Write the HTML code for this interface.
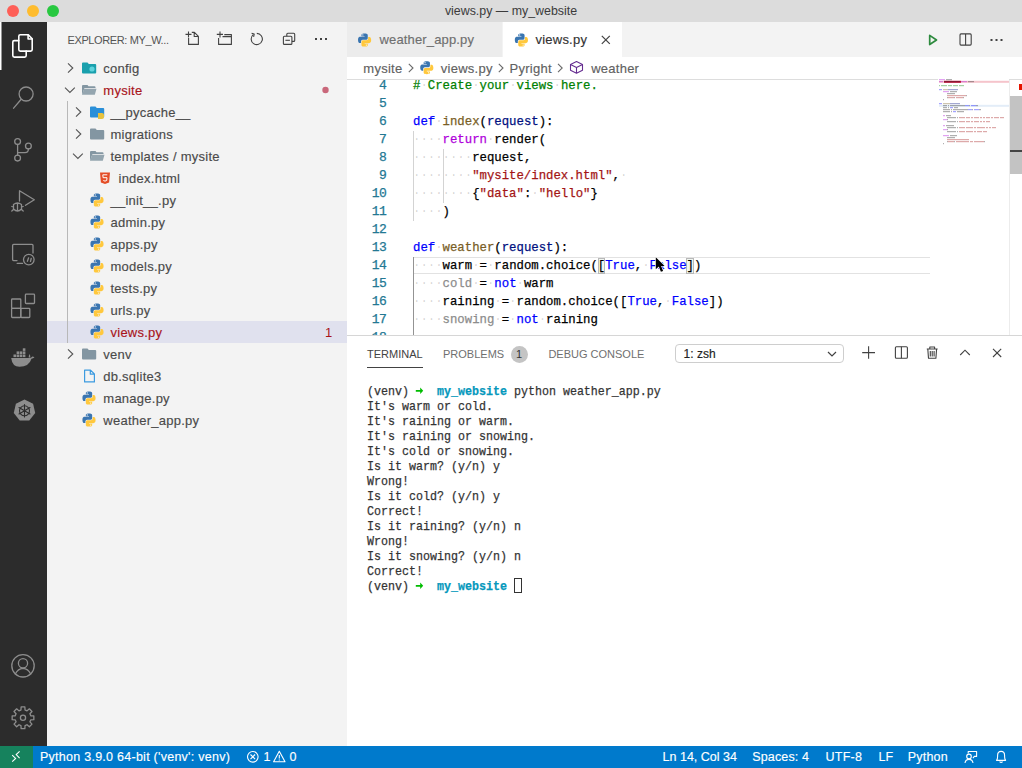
<!DOCTYPE html>
<html><head><meta charset="utf-8">
<style>
*{margin:0;padding:0;box-sizing:border-box}
html,body{width:1022px;height:768px;overflow:hidden;background:#fff;font-family:"Liberation Sans",sans-serif;color:#616161}
.a{position:absolute}
#title{left:0;top:0;width:1022px;height:22px;background:#dcdcdc}
.tl{position:absolute;top:5px;width:12px;height:12px;border-radius:50%}
#ttext{left:0;width:1022px;top:4px;text-align:center;font-size:12.4px;color:#3b3b3b}
#act{left:0;top:22px;width:47px;height:724px;background:#2c2c2c}
#side{left:47px;top:22px;width:300px;height:724px;background:#f3f3f3}
.row{position:absolute;left:0;width:299px;height:22px;font-size:13px;line-height:22px;color:#616161;white-space:nowrap}
.row .t{position:absolute;top:0}
.row svg{position:absolute}
#tabs{left:347px;top:22px;width:675px;height:35px;background:#f3f3f3}
.tab{position:absolute;top:0;height:35px;font-size:13px;line-height:35px;white-space:nowrap}
#editor{left:347px;top:80px;width:591px;height:255px;background:#fff;overflow:hidden}
.code{position:absolute;font-family:"Liberation Mono",monospace;font-size:13px;transform:scaleX(0.9474);transform-origin:0 0;white-space:pre;line-height:18px;color:#000}
.ws{color:rgba(51,51,51,0.22)}
.code,.term,.ln{-webkit-text-stroke:0.25px currentColor}
.ui{-webkit-text-stroke:0.15px currentColor}
.code .ws{-webkit-text-stroke:0;color:rgba(51,51,51,0.2)}
.ln{position:absolute;left:340px;width:46.5px;text-align:right;font-family:"Liberation Mono",monospace;font-size:13px;letter-spacing:-0.37px;line-height:18px;color:#237893}
#panel{left:347px;top:337px;width:675px;height:409px;background:#fff;border-top:1px solid #d4d4d4}
#status{left:0;top:746px;width:1022px;height:22px;background:#007acc;color:#fff;font-size:13px;line-height:22px;white-space:nowrap}
.term{position:absolute;left:367px;font-family:"Liberation Mono",monospace;font-size:13.2px;line-height:15px;white-space:pre;color:#333;transform:scaleX(0.884);transform-origin:0 0}
</style></head><body>
<div id="title" class="a">
  <div class="tl" style="left:7px;background:#fe5f57"></div>
  <div class="tl" style="left:27px;background:#febc2e"></div>
  <div class="tl" style="left:47px;background:#28c840"></div>
  <div id="ttext" class="a">views.py — my_website</div>
</div>
<div id="act" class="a"></div>
<svg class="a" style="left:0;top:0" width="48" height="768" fill="none" stroke-linejoin="round" stroke-linecap="round">
 <rect x="0" y="22" width="1.5" height="48" fill="#fff" stroke="none"/>
 <g stroke="#fff" stroke-width="1.6">
  <path d="M20.3,34.8 H28.3 L32.2,38.7 V49.6 Q32.2,51.1 30.7,51.1 H20.3 Q18.8,51.1 18.8,49.6 V36.3 Q18.8,34.8 20.3,34.8 Z"/>
  <path d="M28.1,35 V39 H32"/>
  <path d="M18.8,40.6 H14.3 Q12.8,40.6 12.8,42.1 V55.6 Q12.8,57.1 14.3,57.1 H24.7 Q26.2,57.1 26.2,55.6 V51.1"/>
 </g>
 <g stroke="#8d8d8d" stroke-width="1.3">
  <circle cx="26.1" cy="94" r="7"/>
  <path d="M21,99.5 L13.6,108.2"/>
  <circle cx="17.6" cy="141.6" r="2.9"/>
  <circle cx="17.6" cy="158.1" r="2.9"/>
  <circle cx="28.4" cy="146.1" r="2.9"/>
  <path d="M17.6,144.5 V155.2 M17.6,153 Q17.6,152.6 19,152.6 H25 Q28.4,152.6 28.4,149"/>
  <path d="M19.5,190.8 V201 M19.5,190.8 L34.3,199.8 L25.5,205.3"/>
  <path d="M13.5,204.5 Q17.5,201.5 21.5,204.5 V209 Q17.5,213 13.5,209 Z M11.8,206.5 L13.5,207 M11.8,211 L13.5,209.5 M23.2,206.5 L21.5,207 M23.2,211 L21.5,209.5 M17.5,204 V211"/>
  <path d="M17,260.6 H13.6 Q12.6,260.6 12.6,259.6 V245.4 Q12.6,244.4 13.6,244.4 H32 Q33,244.4 33,245.4 V253"/>
  <circle cx="28.8" cy="259.6" r="5.3"/>
  <path d="M17.2,263.4 H22.5 M27.4,261.3 L28.6,257.8 M30.5,261.3 L31.2,258.5"/>
  <rect x="11.6" y="299" width="9.2" height="9.3" rx="0.8"/>
  <rect x="11.6" y="308.3" width="9.2" height="9.2" rx="0.8"/>
  <rect x="20.8" y="308.3" width="9" height="9.2" rx="0.8"/>
  <rect x="25.4" y="294.2" width="9.1" height="9.3" rx="0.8"/>
  <circle cx="23" cy="665.8" r="11.2"/>
  <circle cx="23" cy="663.2" r="4.6"/>
  <path d="M15.3,674 Q18,668.5 23,668.3 Q28,668.5 30.7,674"/>
  <path d="M30.39,714.74 L30.73,715.74 L33.84,715.94 L33.84,719.66 L30.73,719.86 L30.39,720.86 L29.92,721.81 L31.98,724.15 L29.35,726.78 L27.01,724.72 L26.06,725.19 L25.06,725.53 L24.86,728.64 L21.14,728.64 L20.94,725.53 L19.94,725.19 L18.99,724.72 L16.65,726.78 L14.02,724.15 L16.08,721.81 L15.61,720.86 L15.27,719.86 L12.16,719.66 L12.16,715.94 L15.27,715.74 L15.61,714.74 L16.08,713.79 L14.02,711.45 L16.65,708.82 L18.99,710.88 L19.94,710.41 L20.94,710.07 L21.14,706.96 L24.86,706.96 L25.06,710.07 L26.06,710.41 L27.01,710.88 L29.35,708.82 L31.98,711.45 L29.92,713.79 Z"/>
  <circle cx="23" cy="717.8" r="2.6"/>
 </g>
 <g fill="#8d8d8d" stroke="none">
  <path d="M11.2,358 H30 Q31.5,357.8 32.3,356.6 Q33.5,356.8 34.5,357.2 Q33.2,358.5 31.5,358.8 Q29,366.8 19.5,366.8 Q12.2,366.8 11.2,358 Z"/>
  <rect x="13.5" y="354.5" width="2.6" height="2.6"/><rect x="16.6" y="354.5" width="2.6" height="2.6"/><rect x="19.7" y="354.5" width="2.6" height="2.6"/><rect x="22.8" y="354.5" width="2.6" height="2.6"/>
  <rect x="16.6" y="351.4" width="2.6" height="2.6"/><rect x="19.7" y="351.4" width="2.6" height="2.6"/><rect x="22.8" y="351.4" width="2.6" height="2.6"/><rect x="22.8" y="348.3" width="2.6" height="2.6"/>
  <path d="M29.5,354 Q30.5,355.5 30.3,357.5 L28.7,357.5 Q28.6,355.5 29.5,354 Z"/>
  <path d="M24.50,399.50 L33.10,403.64 L35.22,412.95 L29.27,420.41 L19.73,420.41 L13.78,412.95 L15.90,403.64 Z"/>
 </g>
 <g stroke="#2c2c2c" stroke-width="1.1">
  <circle cx="24.5" cy="410.8" r="5"/>
  <path d="M24.5,404.5 V417 M19,407.6 L30,414 M19,414 L30,407.6"/>
 </g>
</svg>
<div id="side" class="a"></div>
<div class="a" style="left:47px;top:321px;width:300px;height:22px;background:#e0e1ee"></div>
<svg class="a" style="left:0;top:0" width="347" height="768"><g stroke="#424242" stroke-width="1.1" fill="none" stroke-linejoin="round">
 <path d="M185.5,34.4 H191.5 M188.5,31.4 V37.4"/>
 <path d="M188.6,38 V44.4 H198.4 V36.4 L194.4,32.4 H191.8 M194.2,32.5 V36.5 H198.3"/>
 <path d="M216.8,34.4 H223 M220,31.4 V37.4"/>
 <path d="M218.6,38 V44.4 H231.4 V34.6 H224.3 M222.5,36.6 H231.3"/>
 <path d="M253.3,34.6 A5.6,5.6 0 1 0 256.8,33.4"/>
 <path d="M251.6,33.3 L254.2,34.1 L253.6,36.9"/>
 <path d="M286.8,36.2 V34.2 Q286.8,33.2 287.8,33.2 H293.7 Q294.7,33.2 294.7,34.2 V40.4 Q294.7,41.4 293.7,41.4 H291.9"/>
 <rect x="283.4" y="36.2" width="8.5" height="8.2" rx="1"/>
 <path d="M285.4,40.3 H289.9"/>
</g>
<g fill="#424242"><rect x="315" y="38" width="2" height="2"/><rect x="320" y="38" width="2" height="2"/><rect x="325" y="38" width="2" height="2"/></g><path d="M68,63.4 L72.8,68 L68,72.6" stroke="#555" stroke-width="1.1" fill="none"/>
<path d="M82,63.4 Q82,62.4 83,62.4 H87.5 L88.8,63.9 H95.2 Q96.2,63.9 96.2,64.9 V72.6 Q96.2,73.6 95.2,73.6 H83 Q82,73.6 82,72.6 Z" fill="#1aa0ad"/>
<circle cx="92" cy="69" r="2.6" fill="#5fd3dc"/>
<path d="M65,87.7 L69.9,92.5 L74.8,87.7" stroke="#555" stroke-width="1.1" fill="none"/>
<path d="M82,86 Q82,85 83,85 H87.5 L88.5,86.2 H94.5 Q95.5,86.2 95.5,87.2 V88 H84.5 L82,94.8 Z" fill="#8396a2"/><path d="M84.2,88.8 H96.5 L94.8,94.8 H82 Z" fill="#8396a2" opacity="0.85"/>
<path d="M76,107.4 L80.8,112 L76,116.6" stroke="#555" stroke-width="1.1" fill="none"/>
<path d="M90,107.4 Q90,106.4 91,106.4 H95.5 L96.8,107.9 H103.2 Q104.2,107.9 104.2,108.9 V116.60000000000001 Q104.2,117.60000000000001 103.2,117.60000000000001 H91 Q90,117.60000000000001 90,116.60000000000001 Z" fill="#2a8fd8"/>
<path d="M98,113 h4 a2,2 0 0 1 2,2 v2 a2,2 0 0 1 -2,2 h-4 Z" fill="#e8c23d"/>
<path d="M76,129.4 L80.8,134 L76,138.6" stroke="#555" stroke-width="1.1" fill="none"/>
<path d="M90,129.4 Q90,128.4 91,128.4 H95.5 L96.8,129.9 H103.2 Q104.2,129.9 104.2,130.9 V138.6 Q104.2,139.6 103.2,139.6 H91 Q90,139.6 90,138.6 Z" fill="#8396a2"/>
<path d="M73,153.7 L77.9,158.5 L82.8,153.7" stroke="#555" stroke-width="1.1" fill="none"/>
<path d="M90,152 Q90,151 91,151 H95.5 L96.5,152.2 H102.5 Q103.5,152.2 103.5,153.2 V154 H92.5 L90,160.8 Z" fill="#8396a2"/><path d="M92.2,154.8 H104.5 L102.8,160.8 H90 Z" fill="#8396a2" opacity="0.85"/>
<path d="M100,172.5 H110 L109.1,182.5 L105,184.0 L100.9,182.5 Z" fill="#e44d26"/>
<path d="M107.3,174.8 H102.8 L103.1,177.7 H107 L106.7,180.5 L105,181.1 L103.3,180.5" stroke="#fff" stroke-width="1" fill="none"/>
<g transform="translate(90,193) scale(0.875)"><path d="M7.9,0.5 C4.2,0.5 4.4,2.1 4.4,2.1 V3.8 H8 V4.4 H2.9 C2.9,4.4 0.5,4.1 0.5,7.9 C0.5,11.7 2.6,11.5 2.6,11.5 H3.9 V9.7 C3.9,9.7 3.8,7.6 6,7.6 H9.6 C9.6,7.6 11.6,7.7 11.6,5.6 V2.4 C11.6,2.4 11.9,0.5 7.9,0.5 Z" fill="#3a75b0"/><circle cx="6" cy="2.2" r="0.7" fill="#fff"/><path d="M8.1,15.5 C11.8,15.5 11.6,13.9 11.6,13.9 V12.2 H8 V11.6 H13.1 C13.1,11.6 15.5,11.9 15.5,8.1 C15.5,4.3 13.4,4.5 13.4,4.5 H12.1 V6.3 C12.1,6.3 12.2,8.4 10,8.4 H6.4 C6.4,8.4 4.4,8.3 4.4,10.4 V13.6 C4.4,13.6 4.1,15.5 8.1,15.5 Z" fill="#ffc83d"/><circle cx="10" cy="13.8" r="0.7" fill="#fff"/></g>
<g transform="translate(90,215) scale(0.875)"><path d="M7.9,0.5 C4.2,0.5 4.4,2.1 4.4,2.1 V3.8 H8 V4.4 H2.9 C2.9,4.4 0.5,4.1 0.5,7.9 C0.5,11.7 2.6,11.5 2.6,11.5 H3.9 V9.7 C3.9,9.7 3.8,7.6 6,7.6 H9.6 C9.6,7.6 11.6,7.7 11.6,5.6 V2.4 C11.6,2.4 11.9,0.5 7.9,0.5 Z" fill="#3a75b0"/><circle cx="6" cy="2.2" r="0.7" fill="#fff"/><path d="M8.1,15.5 C11.8,15.5 11.6,13.9 11.6,13.9 V12.2 H8 V11.6 H13.1 C13.1,11.6 15.5,11.9 15.5,8.1 C15.5,4.3 13.4,4.5 13.4,4.5 H12.1 V6.3 C12.1,6.3 12.2,8.4 10,8.4 H6.4 C6.4,8.4 4.4,8.3 4.4,10.4 V13.6 C4.4,13.6 4.1,15.5 8.1,15.5 Z" fill="#ffc83d"/><circle cx="10" cy="13.8" r="0.7" fill="#fff"/></g>
<g transform="translate(90,237) scale(0.875)"><path d="M7.9,0.5 C4.2,0.5 4.4,2.1 4.4,2.1 V3.8 H8 V4.4 H2.9 C2.9,4.4 0.5,4.1 0.5,7.9 C0.5,11.7 2.6,11.5 2.6,11.5 H3.9 V9.7 C3.9,9.7 3.8,7.6 6,7.6 H9.6 C9.6,7.6 11.6,7.7 11.6,5.6 V2.4 C11.6,2.4 11.9,0.5 7.9,0.5 Z" fill="#3a75b0"/><circle cx="6" cy="2.2" r="0.7" fill="#fff"/><path d="M8.1,15.5 C11.8,15.5 11.6,13.9 11.6,13.9 V12.2 H8 V11.6 H13.1 C13.1,11.6 15.5,11.9 15.5,8.1 C15.5,4.3 13.4,4.5 13.4,4.5 H12.1 V6.3 C12.1,6.3 12.2,8.4 10,8.4 H6.4 C6.4,8.4 4.4,8.3 4.4,10.4 V13.6 C4.4,13.6 4.1,15.5 8.1,15.5 Z" fill="#ffc83d"/><circle cx="10" cy="13.8" r="0.7" fill="#fff"/></g>
<g transform="translate(90,259) scale(0.875)"><path d="M7.9,0.5 C4.2,0.5 4.4,2.1 4.4,2.1 V3.8 H8 V4.4 H2.9 C2.9,4.4 0.5,4.1 0.5,7.9 C0.5,11.7 2.6,11.5 2.6,11.5 H3.9 V9.7 C3.9,9.7 3.8,7.6 6,7.6 H9.6 C9.6,7.6 11.6,7.7 11.6,5.6 V2.4 C11.6,2.4 11.9,0.5 7.9,0.5 Z" fill="#3a75b0"/><circle cx="6" cy="2.2" r="0.7" fill="#fff"/><path d="M8.1,15.5 C11.8,15.5 11.6,13.9 11.6,13.9 V12.2 H8 V11.6 H13.1 C13.1,11.6 15.5,11.9 15.5,8.1 C15.5,4.3 13.4,4.5 13.4,4.5 H12.1 V6.3 C12.1,6.3 12.2,8.4 10,8.4 H6.4 C6.4,8.4 4.4,8.3 4.4,10.4 V13.6 C4.4,13.6 4.1,15.5 8.1,15.5 Z" fill="#ffc83d"/><circle cx="10" cy="13.8" r="0.7" fill="#fff"/></g>
<g transform="translate(90,281) scale(0.875)"><path d="M7.9,0.5 C4.2,0.5 4.4,2.1 4.4,2.1 V3.8 H8 V4.4 H2.9 C2.9,4.4 0.5,4.1 0.5,7.9 C0.5,11.7 2.6,11.5 2.6,11.5 H3.9 V9.7 C3.9,9.7 3.8,7.6 6,7.6 H9.6 C9.6,7.6 11.6,7.7 11.6,5.6 V2.4 C11.6,2.4 11.9,0.5 7.9,0.5 Z" fill="#3a75b0"/><circle cx="6" cy="2.2" r="0.7" fill="#fff"/><path d="M8.1,15.5 C11.8,15.5 11.6,13.9 11.6,13.9 V12.2 H8 V11.6 H13.1 C13.1,11.6 15.5,11.9 15.5,8.1 C15.5,4.3 13.4,4.5 13.4,4.5 H12.1 V6.3 C12.1,6.3 12.2,8.4 10,8.4 H6.4 C6.4,8.4 4.4,8.3 4.4,10.4 V13.6 C4.4,13.6 4.1,15.5 8.1,15.5 Z" fill="#ffc83d"/><circle cx="10" cy="13.8" r="0.7" fill="#fff"/></g>
<g transform="translate(90,303) scale(0.875)"><path d="M7.9,0.5 C4.2,0.5 4.4,2.1 4.4,2.1 V3.8 H8 V4.4 H2.9 C2.9,4.4 0.5,4.1 0.5,7.9 C0.5,11.7 2.6,11.5 2.6,11.5 H3.9 V9.7 C3.9,9.7 3.8,7.6 6,7.6 H9.6 C9.6,7.6 11.6,7.7 11.6,5.6 V2.4 C11.6,2.4 11.9,0.5 7.9,0.5 Z" fill="#3a75b0"/><circle cx="6" cy="2.2" r="0.7" fill="#fff"/><path d="M8.1,15.5 C11.8,15.5 11.6,13.9 11.6,13.9 V12.2 H8 V11.6 H13.1 C13.1,11.6 15.5,11.9 15.5,8.1 C15.5,4.3 13.4,4.5 13.4,4.5 H12.1 V6.3 C12.1,6.3 12.2,8.4 10,8.4 H6.4 C6.4,8.4 4.4,8.3 4.4,10.4 V13.6 C4.4,13.6 4.1,15.5 8.1,15.5 Z" fill="#ffc83d"/><circle cx="10" cy="13.8" r="0.7" fill="#fff"/></g>
<g transform="translate(90,325) scale(0.875)"><path d="M7.9,0.5 C4.2,0.5 4.4,2.1 4.4,2.1 V3.8 H8 V4.4 H2.9 C2.9,4.4 0.5,4.1 0.5,7.9 C0.5,11.7 2.6,11.5 2.6,11.5 H3.9 V9.7 C3.9,9.7 3.8,7.6 6,7.6 H9.6 C9.6,7.6 11.6,7.7 11.6,5.6 V2.4 C11.6,2.4 11.9,0.5 7.9,0.5 Z" fill="#3a75b0"/><circle cx="6" cy="2.2" r="0.7" fill="#fff"/><path d="M8.1,15.5 C11.8,15.5 11.6,13.9 11.6,13.9 V12.2 H8 V11.6 H13.1 C13.1,11.6 15.5,11.9 15.5,8.1 C15.5,4.3 13.4,4.5 13.4,4.5 H12.1 V6.3 C12.1,6.3 12.2,8.4 10,8.4 H6.4 C6.4,8.4 4.4,8.3 4.4,10.4 V13.6 C4.4,13.6 4.1,15.5 8.1,15.5 Z" fill="#ffc83d"/><circle cx="10" cy="13.8" r="0.7" fill="#fff"/></g>
<path d="M68,349.4 L72.8,354 L68,358.6" stroke="#555" stroke-width="1.1" fill="none"/>
<path d="M82,349.4 Q82,348.4 83,348.4 H87.5 L88.8,349.9 H95.2 Q96.2,349.9 96.2,350.9 V358.59999999999997 Q96.2,359.59999999999997 95.2,359.59999999999997 H83 Q82,359.59999999999997 82,358.59999999999997 Z" fill="#8396a2"/>
<path d="M84.6,370.1 H90.5 L94.4,374.0 V381.9 H84.6 Z M90.3,370.3 V374.2 H94.2" stroke="#3d9be0" stroke-width="1.2" fill="none" stroke-linejoin="round"/>
<g transform="translate(82,391) scale(0.875)"><path d="M7.9,0.5 C4.2,0.5 4.4,2.1 4.4,2.1 V3.8 H8 V4.4 H2.9 C2.9,4.4 0.5,4.1 0.5,7.9 C0.5,11.7 2.6,11.5 2.6,11.5 H3.9 V9.7 C3.9,9.7 3.8,7.6 6,7.6 H9.6 C9.6,7.6 11.6,7.7 11.6,5.6 V2.4 C11.6,2.4 11.9,0.5 7.9,0.5 Z" fill="#3a75b0"/><circle cx="6" cy="2.2" r="0.7" fill="#fff"/><path d="M8.1,15.5 C11.8,15.5 11.6,13.9 11.6,13.9 V12.2 H8 V11.6 H13.1 C13.1,11.6 15.5,11.9 15.5,8.1 C15.5,4.3 13.4,4.5 13.4,4.5 H12.1 V6.3 C12.1,6.3 12.2,8.4 10,8.4 H6.4 C6.4,8.4 4.4,8.3 4.4,10.4 V13.6 C4.4,13.6 4.1,15.5 8.1,15.5 Z" fill="#ffc83d"/><circle cx="10" cy="13.8" r="0.7" fill="#fff"/></g>
<g transform="translate(82,413) scale(0.875)"><path d="M7.9,0.5 C4.2,0.5 4.4,2.1 4.4,2.1 V3.8 H8 V4.4 H2.9 C2.9,4.4 0.5,4.1 0.5,7.9 C0.5,11.7 2.6,11.5 2.6,11.5 H3.9 V9.7 C3.9,9.7 3.8,7.6 6,7.6 H9.6 C9.6,7.6 11.6,7.7 11.6,5.6 V2.4 C11.6,2.4 11.9,0.5 7.9,0.5 Z" fill="#3a75b0"/><circle cx="6" cy="2.2" r="0.7" fill="#fff"/><path d="M8.1,15.5 C11.8,15.5 11.6,13.9 11.6,13.9 V12.2 H8 V11.6 H13.1 C13.1,11.6 15.5,11.9 15.5,8.1 C15.5,4.3 13.4,4.5 13.4,4.5 H12.1 V6.3 C12.1,6.3 12.2,8.4 10,8.4 H6.4 C6.4,8.4 4.4,8.3 4.4,10.4 V13.6 C4.4,13.6 4.1,15.5 8.1,15.5 Z" fill="#ffc83d"/><circle cx="10" cy="13.8" r="0.7" fill="#fff"/></g>
<rect x="67" y="101" width="1" height="242" fill="#b8b8b8"/>
<circle cx="325.5" cy="90" r="3.2" fill="#c9677a"/></svg>
<div class="a" style="left:67.5px;top:34px;font-size:11px;letter-spacing:-0.38px;color:#555555;white-space:nowrap">EXPLORER: MY_W...</div>
<div class="a ui" style="left:103.3px;top:58px;height:22px;line-height:22px;font-size:13px;letter-spacing:0.25px;color:#4a4a4a;white-space:nowrap">config</div>
<div class="a ui" style="left:103.3px;top:80px;height:22px;line-height:22px;font-size:13px;letter-spacing:0.25px;color:#a8141a;white-space:nowrap">mysite</div>
<div class="a ui" style="left:110.5px;top:102px;height:22px;line-height:22px;font-size:13px;letter-spacing:0.25px;color:#4a4a4a;white-space:nowrap">__pycache__</div>
<div class="a ui" style="left:110.5px;top:124px;height:22px;line-height:22px;font-size:13px;letter-spacing:0.25px;color:#4a4a4a;white-space:nowrap">migrations</div>
<div class="a ui" style="left:110.5px;top:146px;height:22px;line-height:22px;font-size:13px;letter-spacing:0.25px;color:#4a4a4a;white-space:nowrap">templates / mysite</div>
<div class="a ui" style="left:118.5px;top:168px;height:22px;line-height:22px;font-size:13px;letter-spacing:0.25px;color:#4a4a4a;white-space:nowrap">index.html</div>
<div class="a ui" style="left:110.5px;top:190px;height:22px;line-height:22px;font-size:13px;letter-spacing:0.25px;color:#4a4a4a;white-space:nowrap">__init__.py</div>
<div class="a ui" style="left:110.5px;top:212px;height:22px;line-height:22px;font-size:13px;letter-spacing:0.25px;color:#4a4a4a;white-space:nowrap">admin.py</div>
<div class="a ui" style="left:110.5px;top:234px;height:22px;line-height:22px;font-size:13px;letter-spacing:0.25px;color:#4a4a4a;white-space:nowrap">apps.py</div>
<div class="a ui" style="left:110.5px;top:256px;height:22px;line-height:22px;font-size:13px;letter-spacing:0.25px;color:#4a4a4a;white-space:nowrap">models.py</div>
<div class="a ui" style="left:110.5px;top:278px;height:22px;line-height:22px;font-size:13px;letter-spacing:0.25px;color:#4a4a4a;white-space:nowrap">tests.py</div>
<div class="a ui" style="left:110.5px;top:300px;height:22px;line-height:22px;font-size:13px;letter-spacing:0.25px;color:#4a4a4a;white-space:nowrap">urls.py</div>
<div class="a ui" style="left:110.5px;top:322px;height:22px;line-height:22px;font-size:13px;letter-spacing:0.25px;color:#a8141a;white-space:nowrap">views.py</div>
<div class="a ui" style="left:103.3px;top:344px;height:22px;line-height:22px;font-size:13px;letter-spacing:0.25px;color:#4a4a4a;white-space:nowrap">venv</div>
<div class="a ui" style="left:103.3px;top:366px;height:22px;line-height:22px;font-size:13px;letter-spacing:0.25px;color:#4a4a4a;white-space:nowrap">db.sqlite3</div>
<div class="a ui" style="left:103.3px;top:388px;height:22px;line-height:22px;font-size:13px;letter-spacing:0.25px;color:#4a4a4a;white-space:nowrap">manage.py</div>
<div class="a ui" style="left:103.3px;top:410px;height:22px;line-height:22px;font-size:13px;letter-spacing:0.25px;color:#4a4a4a;white-space:nowrap">weather_app.py</div>
<div class="a" style="left:325px;top:322px;height:22px;line-height:22px;font-size:13px;letter-spacing:0.25px;color:#a8141a">1</div>
<div class="a" style="left:347px;top:22px;width:675px;height:35px;background:#f3f3f3"></div>
<div class="a" style="left:347px;top:22px;width:156px;height:35px;background:#ececec;border-right:1px solid #f3f3f3"></div>
<div class="a" style="left:503px;top:22px;width:119px;height:35px;background:#ffffff"></div>
<div class="a ui" style="left:379.5px;top:22px;height:35px;line-height:35px;font-size:13px;letter-spacing:0.15px;color:#6f6f6f;white-space:nowrap">weather_app.py</div>
<div class="a ui" style="left:535.5px;top:22px;height:35px;line-height:35px;font-size:13px;letter-spacing:0.22px;color:#333333;white-space:nowrap">views.py</div>
<div class="a ui" style="left:363.3px;top:58px;height:22px;line-height:22px;font-size:13px;letter-spacing:0.25px;color:#616161;white-space:nowrap">mysite</div>
<div class="a ui" style="left:440.8px;top:58px;height:22px;line-height:22px;font-size:13px;letter-spacing:0.25px;color:#616161;white-space:nowrap">views.py</div>
<div class="a ui" style="left:509.6px;top:58px;height:22px;line-height:22px;font-size:13px;letter-spacing:0.25px;color:#616161;white-space:nowrap">Pyright</div>
<div class="a ui" style="left:591.2px;top:58px;height:22px;line-height:22px;font-size:13px;letter-spacing:0.25px;color:#616161;white-space:nowrap">weather</div>
<svg class="a" style="left:0;top:0" width="1022" height="80"><g transform="translate(357.6,33) scale(0.875)"><path d="M7.9,0.5 C4.2,0.5 4.4,2.1 4.4,2.1 V3.8 H8 V4.4 H2.9 C2.9,4.4 0.5,4.1 0.5,7.9 C0.5,11.7 2.6,11.5 2.6,11.5 H3.9 V9.7 C3.9,9.7 3.8,7.6 6,7.6 H9.6 C9.6,7.6 11.6,7.7 11.6,5.6 V2.4 C11.6,2.4 11.9,0.5 7.9,0.5 Z" fill="#3a75b0"/><circle cx="6" cy="2.2" r="0.7" fill="#fff"/><path d="M8.1,15.5 C11.8,15.5 11.6,13.9 11.6,13.9 V12.2 H8 V11.6 H13.1 C13.1,11.6 15.5,11.9 15.5,8.1 C15.5,4.3 13.4,4.5 13.4,4.5 H12.1 V6.3 C12.1,6.3 12.2,8.4 10,8.4 H6.4 C6.4,8.4 4.4,8.3 4.4,10.4 V13.6 C4.4,13.6 4.1,15.5 8.1,15.5 Z" fill="#ffc83d"/><circle cx="10" cy="13.8" r="0.7" fill="#fff"/></g><g transform="translate(514.4,33) scale(0.875)"><path d="M7.9,0.5 C4.2,0.5 4.4,2.1 4.4,2.1 V3.8 H8 V4.4 H2.9 C2.9,4.4 0.5,4.1 0.5,7.9 C0.5,11.7 2.6,11.5 2.6,11.5 H3.9 V9.7 C3.9,9.7 3.8,7.6 6,7.6 H9.6 C9.6,7.6 11.6,7.7 11.6,5.6 V2.4 C11.6,2.4 11.9,0.5 7.9,0.5 Z" fill="#3a75b0"/><circle cx="6" cy="2.2" r="0.7" fill="#fff"/><path d="M8.1,15.5 C11.8,15.5 11.6,13.9 11.6,13.9 V12.2 H8 V11.6 H13.1 C13.1,11.6 15.5,11.9 15.5,8.1 C15.5,4.3 13.4,4.5 13.4,4.5 H12.1 V6.3 C12.1,6.3 12.2,8.4 10,8.4 H6.4 C6.4,8.4 4.4,8.3 4.4,10.4 V13.6 C4.4,13.6 4.1,15.5 8.1,15.5 Z" fill="#ffc83d"/><circle cx="10" cy="13.8" r="0.7" fill="#fff"/></g><path d="M601.8,35.9 L609.8,43.9 M609.8,35.9 L601.8,43.9" stroke="#424242" stroke-width="1.2"/><path d="M929.7,35.4 L936.5,40 L929.7,44.5 Z" stroke="#2d8a3e" stroke-width="1.7" fill="none" stroke-linejoin="round"/><rect x="960" y="33.9" width="11.2" height="11.2" rx="1" stroke="#424242" stroke-width="1.1" fill="none"/><path d="M965.6,33.9 V45.1" stroke="#424242" stroke-width="1.1"/><g fill="#424242"><rect x="990.5" y="39" width="2" height="2"/><rect x="995.5" y="39" width="2" height="2"/><rect x="1000.5" y="39" width="2" height="2"/></g><path d="M408.8,63.8 L413.0,68 L408.8,72.2" stroke="#6a6a6a" stroke-width="1.1" fill="none"/><path d="M498.8,63.8 L503.0,68 L498.8,72.2" stroke="#6a6a6a" stroke-width="1.1" fill="none"/><path d="M558,63.8 L562.2,68 L558,72.2" stroke="#6a6a6a" stroke-width="1.1" fill="none"/><g transform="translate(419.8,60.7) scale(0.875)"><path d="M7.9,0.5 C4.2,0.5 4.4,2.1 4.4,2.1 V3.8 H8 V4.4 H2.9 C2.9,4.4 0.5,4.1 0.5,7.9 C0.5,11.7 2.6,11.5 2.6,11.5 H3.9 V9.7 C3.9,9.7 3.8,7.6 6,7.6 H9.6 C9.6,7.6 11.6,7.7 11.6,5.6 V2.4 C11.6,2.4 11.9,0.5 7.9,0.5 Z" fill="#3a75b0"/><circle cx="6" cy="2.2" r="0.7" fill="#fff"/><path d="M8.1,15.5 C11.8,15.5 11.6,13.9 11.6,13.9 V12.2 H8 V11.6 H13.1 C13.1,11.6 15.5,11.9 15.5,8.1 C15.5,4.3 13.4,4.5 13.4,4.5 H12.1 V6.3 C12.1,6.3 12.2,8.4 10,8.4 H6.4 C6.4,8.4 4.4,8.3 4.4,10.4 V13.6 C4.4,13.6 4.1,15.5 8.1,15.5 Z" fill="#ffc83d"/><circle cx="10" cy="13.8" r="0.7" fill="#fff"/></g><g stroke="#652d90" stroke-width="1.1" fill="none" stroke-linejoin="round"><path d="M576.5,61.5 L582.5,64.5 V70.3 L576.5,73.3 L570.5,70.3 V64.5 Z M570.5,64.5 L576.5,67.5 L582.5,64.5 M576.5,67.5 V73.3"/></g></svg>
<svg class="a" style="left:0;top:0" width="1022" height="340"><rect x="939" y="80.8" width="70" height="2" fill="#f5c4cb"/><rect x="944" y="80.8" width="17" height="2" fill="#c0143c"/><rect x="939" y="104.8" width="70" height="2" fill="#e3edf8"/><rect x="939" y="79.1" width="6" height="1.1" fill="#af00db" opacity="0.4"/><rect x="946" y="79.1" width="6" height="1.1" fill="#222" opacity="0.4"/><rect x="939" y="81.1" width="4" height="1.1" fill="#af00db" opacity="0.4"/><rect x="944" y="81.1" width="16" height="1.1" fill="#222" opacity="0.4"/><rect x="961" y="81.1" width="6" height="1.1" fill="#af00db" opacity="0.4"/><rect x="968" y="81.1" width="6" height="1.1" fill="#222" opacity="0.4"/><rect x="939" y="85.1" width="1" height="1.1" fill="#008000" opacity="0.4"/><rect x="941" y="85.1" width="6" height="1.1" fill="#008000" opacity="0.4"/><rect x="948" y="85.1" width="4" height="1.1" fill="#008000" opacity="0.4"/><rect x="953" y="85.1" width="5" height="1.1" fill="#008000" opacity="0.4"/><rect x="959" y="85.1" width="5" height="1.1" fill="#008000" opacity="0.4"/><rect x="939" y="89.1" width="3" height="1.1" fill="#0000ff" opacity="0.4"/><rect x="943" y="89.1" width="5" height="1.1" fill="#795e26" opacity="0.4"/><rect x="948" y="89.1" width="10" height="1.1" fill="#001080" opacity="0.4"/><rect x="943" y="91.1" width="6" height="1.1" fill="#af00db" opacity="0.4"/><rect x="950" y="91.1" width="7" height="1.1" fill="#222" opacity="0.4"/><rect x="947" y="93.1" width="8" height="1.1" fill="#222" opacity="0.4"/><rect x="947" y="95.1" width="19" height="1.1" fill="#a31515" opacity="0.4"/><rect x="966" y="95.1" width="1" height="1.1" fill="#222" opacity="0.4"/><rect x="947" y="97.1" width="1" height="1.1" fill="#222" opacity="0.4"/><rect x="948" y="97.1" width="6" height="1.1" fill="#a31515" opacity="0.4"/><rect x="954" y="97.1" width="1" height="1.1" fill="#222" opacity="0.4"/><rect x="956" y="97.1" width="7" height="1.1" fill="#a31515" opacity="0.4"/><rect x="963" y="97.1" width="1" height="1.1" fill="#222" opacity="0.4"/><rect x="943" y="99.1" width="1" height="1.1" fill="#222" opacity="0.4"/><rect x="939" y="103.1" width="3" height="1.1" fill="#0000ff" opacity="0.4"/><rect x="943" y="103.1" width="7" height="1.1" fill="#795e26" opacity="0.4"/><rect x="950" y="103.1" width="10" height="1.1" fill="#001080" opacity="0.4"/><rect x="943" y="105.1" width="4" height="1.1" fill="#222" opacity="0.4"/><rect x="948" y="105.1" width="1" height="1.1" fill="#222" opacity="0.4"/><rect x="950" y="105.1" width="15" height="1.1" fill="#222" opacity="0.4"/><rect x="965" y="105.1" width="4" height="1.1" fill="#0000ff" opacity="0.4"/><rect x="969" y="105.1" width="1" height="1.1" fill="#222" opacity="0.4"/><rect x="971" y="105.1" width="5" height="1.1" fill="#0000ff" opacity="0.4"/><rect x="976" y="105.1" width="2" height="1.1" fill="#222" opacity="0.4"/><rect x="943" y="107.1" width="4" height="1.1" fill="#222" opacity="0.4"/><rect x="948" y="107.1" width="1" height="1.1" fill="#222" opacity="0.4"/><rect x="950" y="107.1" width="3" height="1.1" fill="#0000ff" opacity="0.4"/><rect x="954" y="107.1" width="4" height="1.1" fill="#222" opacity="0.4"/><rect x="943" y="109.1" width="7" height="1.1" fill="#222" opacity="0.4"/><rect x="951" y="109.1" width="1" height="1.1" fill="#222" opacity="0.4"/><rect x="953" y="109.1" width="15" height="1.1" fill="#222" opacity="0.4"/><rect x="968" y="109.1" width="4" height="1.1" fill="#0000ff" opacity="0.4"/><rect x="972" y="109.1" width="1" height="1.1" fill="#222" opacity="0.4"/><rect x="974" y="109.1" width="5" height="1.1" fill="#0000ff" opacity="0.4"/><rect x="979" y="109.1" width="2" height="1.1" fill="#222" opacity="0.4"/><rect x="943" y="111.1" width="7" height="1.1" fill="#222" opacity="0.4"/><rect x="951" y="111.1" width="1" height="1.1" fill="#222" opacity="0.4"/><rect x="953" y="111.1" width="3" height="1.1" fill="#0000ff" opacity="0.4"/><rect x="957" y="111.1" width="7" height="1.1" fill="#222" opacity="0.4"/><rect x="943" y="115.1" width="2" height="1.1" fill="#af00db" opacity="0.4"/><rect x="946" y="115.1" width="5" height="1.1" fill="#222" opacity="0.4"/><rect x="947" y="117.1" width="9" height="1.1" fill="#222" opacity="0.4"/><rect x="957" y="117.1" width="1" height="1.1" fill="#222" opacity="0.4"/><rect x="959" y="117.1" width="6" height="1.1" fill="#a31515" opacity="0.4"/><rect x="966" y="117.1" width="4" height="1.1" fill="#a31515" opacity="0.4"/><rect x="971" y="117.1" width="2" height="1.1" fill="#a31515" opacity="0.4"/><rect x="974" y="117.1" width="5" height="1.1" fill="#a31515" opacity="0.4"/><rect x="980" y="117.1" width="2" height="1.1" fill="#a31515" opacity="0.4"/><rect x="983" y="117.1" width="2" height="1.1" fill="#a31515" opacity="0.4"/><rect x="986" y="117.1" width="4" height="1.1" fill="#a31515" opacity="0.4"/><rect x="991" y="117.1" width="2" height="1.1" fill="#a31515" opacity="0.4"/><rect x="994" y="117.1" width="5" height="1.1" fill="#a31515" opacity="0.4"/><rect x="1000" y="117.1" width="4" height="1.1" fill="#a31515" opacity="0.4"/><rect x="943" y="119.1" width="4" height="1.1" fill="#af00db" opacity="0.4"/><rect x="947" y="119.1" width="1" height="1.1" fill="#222" opacity="0.4"/><rect x="947" y="121.1" width="9" height="1.1" fill="#222" opacity="0.4"/><rect x="957" y="121.1" width="1" height="1.1" fill="#222" opacity="0.4"/><rect x="959" y="121.1" width="6" height="1.1" fill="#a31515" opacity="0.4"/><rect x="966" y="121.1" width="4" height="1.1" fill="#a31515" opacity="0.4"/><rect x="971" y="121.1" width="2" height="1.1" fill="#a31515" opacity="0.4"/><rect x="974" y="121.1" width="5" height="1.1" fill="#a31515" opacity="0.4"/><rect x="980" y="121.1" width="2" height="1.1" fill="#a31515" opacity="0.4"/><rect x="983" y="121.1" width="2" height="1.1" fill="#a31515" opacity="0.4"/><rect x="986" y="121.1" width="4" height="1.1" fill="#a31515" opacity="0.4"/><rect x="943" y="125.1" width="2" height="1.1" fill="#af00db" opacity="0.4"/><rect x="946" y="125.1" width="8" height="1.1" fill="#222" opacity="0.4"/><rect x="947" y="127.1" width="9" height="1.1" fill="#222" opacity="0.4"/><rect x="957" y="127.1" width="1" height="1.1" fill="#222" opacity="0.4"/><rect x="959" y="127.1" width="6" height="1.1" fill="#a31515" opacity="0.4"/><rect x="966" y="127.1" width="7" height="1.1" fill="#a31515" opacity="0.4"/><rect x="974" y="127.1" width="2" height="1.1" fill="#a31515" opacity="0.4"/><rect x="977" y="127.1" width="8" height="1.1" fill="#a31515" opacity="0.4"/><rect x="986" y="127.1" width="2" height="1.1" fill="#a31515" opacity="0.4"/><rect x="989" y="127.1" width="2" height="1.1" fill="#a31515" opacity="0.4"/><rect x="992" y="127.1" width="4" height="1.1" fill="#a31515" opacity="0.4"/><rect x="943" y="129.10000000000002" width="4" height="1.1" fill="#af00db" opacity="0.4"/><rect x="947" y="129.10000000000002" width="1" height="1.1" fill="#222" opacity="0.4"/><rect x="947" y="131.10000000000002" width="9" height="1.1" fill="#222" opacity="0.4"/><rect x="957" y="131.10000000000002" width="1" height="1.1" fill="#222" opacity="0.4"/><rect x="959" y="131.10000000000002" width="6" height="1.1" fill="#a31515" opacity="0.4"/><rect x="966" y="131.10000000000002" width="7" height="1.1" fill="#a31515" opacity="0.4"/><rect x="974" y="131.10000000000002" width="2" height="1.1" fill="#a31515" opacity="0.4"/><rect x="977" y="131.10000000000002" width="5" height="1.1" fill="#a31515" opacity="0.4"/><rect x="983" y="131.10000000000002" width="4" height="1.1" fill="#a31515" opacity="0.4"/><rect x="943" y="135.10000000000002" width="6" height="1.1" fill="#af00db" opacity="0.4"/><rect x="950" y="135.10000000000002" width="7" height="1.1" fill="#222" opacity="0.4"/><rect x="947" y="137.10000000000002" width="8" height="1.1" fill="#222" opacity="0.4"/><rect x="947" y="139.10000000000002" width="22" height="1.1" fill="#a31515" opacity="0.4"/><rect x="947" y="141.10000000000002" width="1" height="1.1" fill="#222" opacity="0.4"/><rect x="948" y="141.10000000000002" width="6" height="1.1" fill="#a31515" opacity="0.4"/><rect x="954" y="141.10000000000002" width="1" height="1.1" fill="#222" opacity="0.4"/><rect x="956" y="141.10000000000002" width="13" height="1.1" fill="#a31515" opacity="0.4"/><rect x="970" y="141.10000000000002" width="3" height="1.1" fill="#a31515" opacity="0.4"/><rect x="974" y="141.10000000000002" width="10" height="1.1" fill="#a31515" opacity="0.4"/><rect x="984" y="141.10000000000002" width="1" height="1.1" fill="#222" opacity="0.4"/><rect x="943" y="143.10000000000002" width="1" height="1.1" fill="#222" opacity="0.4"/><rect x="1009" y="80" width="1" height="255" fill="#ececec"/><rect x="1010" y="96" width="12" height="78" fill="#c3c3c3"/><rect x="1010" y="150" width="12" height="2" fill="#444"/><rect x="1019" y="84" width="3" height="6" fill="#e51400"/></svg>

<div class="a" style="left:347px;top:79px;width:591px;height:1px;background:#dddddd"></div><div class="a" style="left:1009px;top:79px;width:13px;height:1px;background:#dddddd"></div>

<div id="editor" class="a"><div class="a" style="left:-347px;top:-80px;width:1022px;height:768px"><div class="a" style="left:413px;top:257px;width:517px;height:17px;border-top:1px solid #e2e2e2;border-bottom:1px solid #e2e2e2"></div>
<div class="a" style="left:597.75px;top:258px;width:7.39px;height:16px;border:1px solid #b9b9b9;background:rgba(0,100,0,0.06)"></div>
<div class="a" style="left:686.4px;top:258px;width:7.39px;height:16px;border:1px solid #b9b9b9;background:rgba(0,100,0,0.06)"></div>
<div class="a" style="left:413px;top:131px;width:1px;height:18px;background:#d3d3d3"></div>
<div class="a" style="left:413px;top:149px;width:1px;height:18px;background:#d3d3d3"></div>
<div class="a" style="left:413px;top:167px;width:1px;height:18px;background:#d3d3d3"></div>
<div class="a" style="left:413px;top:185px;width:1px;height:18px;background:#d3d3d3"></div>
<div class="a" style="left:413px;top:203px;width:1px;height:18px;background:#d3d3d3"></div>
<div class="a" style="left:443px;top:149px;width:1px;height:18px;background:#d3d3d3"></div>
<div class="a" style="left:443px;top:167px;width:1px;height:18px;background:#d3d3d3"></div>
<div class="a" style="left:443px;top:185px;width:1px;height:18px;background:#d3d3d3"></div>
<div class="a" style="left:413px;top:257px;width:1px;height:18px;background:#939393"></div>
<div class="a" style="left:413px;top:275px;width:1px;height:18px;background:#939393"></div>
<div class="a" style="left:413px;top:293px;width:1px;height:18px;background:#939393"></div>
<div class="a" style="left:413px;top:311px;width:1px;height:18px;background:#939393"></div>
<div class="a" style="left:413px;top:329px;width:1px;height:18px;background:#939393"></div>
<div class="ln" style="top:77px">4</div>
<div class="code" style="left:413px;top:77px"><span style="color:#008000">#<span class="ws">·</span>Create<span class="ws">·</span>your<span class="ws">·</span>views<span class="ws">·</span>here.</span></div>
<div class="ln" style="top:95px">5</div>
<div class="ln" style="top:113px">6</div>
<div class="code" style="left:413px;top:113px"><span style="color:#0000ff">def</span><span class="ws">·</span><span style="color:#795e26">index</span><span style="color:#000000">(</span><span style="color:#001080">request</span><span style="color:#000000">):</span></div>
<div class="ln" style="top:131px">7</div>
<div class="code" style="left:413px;top:131px"><span class="ws">····</span><span style="color:#af00db">return</span><span class="ws">·</span><span style="color:#000000">render</span><span style="color:#000000">(</span></div>
<div class="ln" style="top:149px">8</div>
<div class="code" style="left:413px;top:149px"><span class="ws">········</span><span style="color:#000000">request</span><span style="color:#000000">,</span></div>
<div class="ln" style="top:167px">9</div>
<div class="code" style="left:413px;top:167px"><span class="ws">········</span><span style="color:#a31515">&quot;mysite/index.html&quot;</span><span style="color:#000000">,</span><span class="ws">·</span></div>
<div class="ln" style="top:185px">10</div>
<div class="code" style="left:413px;top:185px"><span class="ws">········</span><span style="color:#000000">{</span><span style="color:#a31515">&quot;data&quot;</span><span style="color:#000000">:</span><span class="ws">·</span><span style="color:#a31515">&quot;hello&quot;</span><span style="color:#000000">}</span></div>
<div class="ln" style="top:203px">11</div>
<div class="code" style="left:413px;top:203px"><span class="ws">····</span><span style="color:#000000">)</span></div>
<div class="ln" style="top:221px">12</div>
<div class="ln" style="top:239px">13</div>
<div class="code" style="left:413px;top:239px"><span style="color:#0000ff">def</span><span class="ws">·</span><span style="color:#795e26">weather</span><span style="color:#000000">(</span><span style="color:#001080">request</span><span style="color:#000000">):</span></div>
<div class="ln" style="top:257px">14</div>
<div class="code" style="left:413px;top:257px"><span class="ws">····</span><span style="color:#000000">warm</span><span class="ws">·</span><span style="color:#000000">=</span><span class="ws">·</span><span style="color:#000000">random.choice([</span><span style="color:#0000ff">True</span><span style="color:#000000">,</span><span class="ws">·</span><span style="color:#0000ff">False</span><span style="color:#000000">])</span></div>
<div class="ln" style="top:275px">15</div>
<div class="code" style="left:413px;top:275px"><span class="ws">····</span><span style="color:#8c8c8c">cold</span><span class="ws">·</span><span style="color:#000000">=</span><span class="ws">·</span><span style="color:#0000ff">not</span><span class="ws">·</span><span style="color:#000000">warm</span></div>
<div class="ln" style="top:293px">16</div>
<div class="code" style="left:413px;top:293px"><span class="ws">····</span><span style="color:#000000">raining</span><span class="ws">·</span><span style="color:#000000">=</span><span class="ws">·</span><span style="color:#000000">random.choice([</span><span style="color:#0000ff">True</span><span style="color:#000000">,</span><span class="ws">·</span><span style="color:#0000ff">False</span><span style="color:#000000">])</span></div>
<div class="ln" style="top:311px">17</div>
<div class="code" style="left:413px;top:311px"><span class="ws">····</span><span style="color:#8c8c8c">snowing</span><span class="ws">·</span><span style="color:#000000">=</span><span class="ws">·</span><span style="color:#0000ff">not</span><span class="ws">·</span><span style="color:#000000">raining</span></div>
<div class="ln" style="top:329px">18</div>
<svg class="a" style="left:653px;top:255px" width="16" height="24"><path d="M2.8,2.2 V14.2 L5.8,11.6 L7.9,16.8 L10.1,15.9 L8.1,10.9 L11.6,10.9 Z" fill="#000" stroke="#fff" stroke-width="1.2" stroke-linejoin="round" paint-order="stroke"/></svg>
</div></div>
<div class="a" style="left:347px;top:335px;width:675px;height:411px;background:#fff;border-top:1px solid #d6d6d6"></div>
<div class="a" style="left:367px;top:346px;font-size:11px;line-height:16px;color:#424242;white-space:nowrap">TERMINAL</div>
<div class="a" style="left:443px;top:346px;font-size:11px;line-height:16px;color:#6f6f6f;white-space:nowrap">PROBLEMS</div>
<div class="a" style="left:548.4px;top:346px;font-size:11px;line-height:16px;color:#6f6f6f;white-space:nowrap">DEBUG CONSOLE</div>
<div class="a" style="left:367px;top:367px;width:56px;height:1px;background:#424242"></div>
<div class="a" style="left:510.5px;top:345.5px;width:17px;height:17px;border-radius:50%;background:#c4c4c4;color:#333;font-size:11px;line-height:17px;text-align:center">1</div>
<div class="a" style="left:675px;top:344px;width:169px;height:19px;border:1px solid #cecece;border-radius:4px;background:#fff"></div>
<div class="a ui" style="left:683.6px;top:345px;font-size:12px;line-height:18px;color:#222;white-space:nowrap">1: zsh</div>
<svg class="a" style="left:0;top:0" width="1022" height="380"><path d="M828,352 L832,356 L836,352" stroke="#424242" stroke-width="1.2" fill="none"/><path d="M868.6,346.3 V358.8 M862.2,352.6 H875" stroke="#424242" stroke-width="1.1"/><rect x="895.4" y="346.8" width="12" height="11.4" rx="1" stroke="#424242" stroke-width="1.1" fill="none"/><path d="M901.4,346.8 V358.2" stroke="#424242" stroke-width="1.1"/><g stroke="#424242" stroke-width="1.1" fill="none" stroke-linejoin="round"><path d="M926.8,349 H937.6 M929.8,349 V347 H934.6 V349 M927.8,349 L928.5,358.3 H935.9 L936.6,349 M930.3,351 V356.5 M932.2,351 V356.5 M934.1,351 V356.5"/></g><path d="M960.2,355 L965,350.2 L969.8,355" stroke="#424242" stroke-width="1.1" fill="none"/><path d="M993,348.8 L1001.2,357 M1001.2,348.8 L993,357" stroke="#424242" stroke-width="1.1" fill="none"/></svg>
<div class="term" style="top:384px">(venv)    <span style="color:#0598bc;font-weight:bold">my_website</span> python weather_app.py</div>
<div class="term" style="top:399px">It&#x27;s warm or cold.</div>
<div class="term" style="top:414px">It&#x27;s raining or warm.</div>
<div class="term" style="top:429px">It&#x27;s raining or snowing.</div>
<div class="term" style="top:444px">It&#x27;s cold or snowing.</div>
<div class="term" style="top:459px">Is it warm? (y/n) y</div>
<div class="term" style="top:474px">Wrong!</div>
<div class="term" style="top:489px">Is it cold? (y/n) y</div>
<div class="term" style="top:504px">Correct!</div>
<div class="term" style="top:519px">Is it raining? (y/n) n</div>
<div class="term" style="top:534px">Wrong!</div>
<div class="term" style="top:549px">Is it snowing? (y/n) n</div>
<div class="term" style="top:564px">Correct!</div>
<div class="term" style="top:579px">(venv)    <span style="color:#0598bc;font-weight:bold">my_website</span> </div>
<div class="a" style="left:514px;top:578px;width:8px;height:15px;border:1px solid #333"></div>
<svg class="a" style="left:0;top:0" width="1022" height="768"><path d="M415.8,389.95 H420.2 V387.6 L423.2,390.8 L420.2,394.0 V391.65000000000003 H415.8 Z" fill="#00bc00"/><path d="M415.8,584.9499999999999 H420.2 V582.5999999999999 L423.2,585.8 L420.2,589.0 V586.65 H415.8 Z" fill="#00bc00"/></svg>

<div class="a" style="left:0;top:746px;width:1022px;height:22px;background:#007acc"></div>
<div class="a" style="left:0;top:746px;width:33px;height:22px;background:#16825d"></div>
<div class="a ui" style="left:40px;top:746px;height:22px;line-height:22px;font-size:12.5px;letter-spacing:0.26px;color:#fff;white-space:nowrap">Python 3.9.0 64-bit (&#39;venv&#39;: venv)</div>
<div class="a ui" style="left:263.5px;top:746px;height:22px;line-height:22px;font-size:12.5px;letter-spacing:0px;color:#fff;white-space:nowrap">1</div>
<div class="a ui" style="left:289.6px;top:746px;height:22px;line-height:22px;font-size:12.5px;letter-spacing:0px;color:#fff;white-space:nowrap">0</div>
<div class="a ui" style="left:662.6px;top:746px;height:22px;line-height:22px;font-size:12.5px;letter-spacing:0px;color:#fff;white-space:nowrap">Ln 14, Col 34</div>
<div class="a ui" style="left:752.2px;top:746px;height:22px;line-height:22px;font-size:12.5px;letter-spacing:0.15px;color:#fff;white-space:nowrap">Spaces: 4</div>
<div class="a ui" style="left:825.4px;top:746px;height:22px;line-height:22px;font-size:12.5px;letter-spacing:0.3px;color:#fff;white-space:nowrap">UTF-8</div>
<div class="a ui" style="left:878.6px;top:746px;height:22px;line-height:22px;font-size:12.5px;letter-spacing:0px;color:#fff;white-space:nowrap">LF</div>
<div class="a ui" style="left:907.8px;top:746px;height:22px;line-height:22px;font-size:12.5px;letter-spacing:0.2px;color:#fff;white-space:nowrap">Python</div>
<svg class="a" style="left:0;top:0" width="1022" height="768"><path d="M12.2,755.2 L15.6,758.4 L12.2,761.6 M19.6,751.4 L16.2,754.6 L19.6,758.2" stroke="#fff" stroke-width="1.1" fill="none"/><circle cx="252.8" cy="756.8" r="5.3" stroke="#fff" stroke-width="1.1" fill="none"/><path d="M250.5,754.5 L255.1,759.1 M255.1,754.5 L250.5,759.1" stroke="#fff" stroke-width="1.1"/><path d="M279.3,751.3 L285,761.8 H273.6 Z" stroke="#fff" stroke-width="1.1" fill="none" stroke-linejoin="round"/><path d="M279.3,755 V758.4 M279.3,759.6 V760.6" stroke="#fff" stroke-width="1.1"/><g stroke="#fff" stroke-width="1.1" fill="none" stroke-linejoin="round"><circle cx="969" cy="756.4" r="2.3"/><path d="M965,763 Q965.6,759.4 969,759.4 Q972.4,759.4 973,763 M968.2,753.6 V751.5 H976.6 V756.4 H974.4 L972.9,758.2"/></g><path d="M996.6,760.4 Q997.6,759 997.6,756.8 V755.4 Q997.6,751.4 1001.1,751.4 Q1004.6,751.4 1004.6,755.4 V756.8 Q1004.6,759 1005.6,760.4 Z M999.6,761.6 Q1001.1,763.2 1002.6,761.6" stroke="#fff" stroke-width="1.1" fill="none" stroke-linejoin="round"/></svg>

</body></html>
